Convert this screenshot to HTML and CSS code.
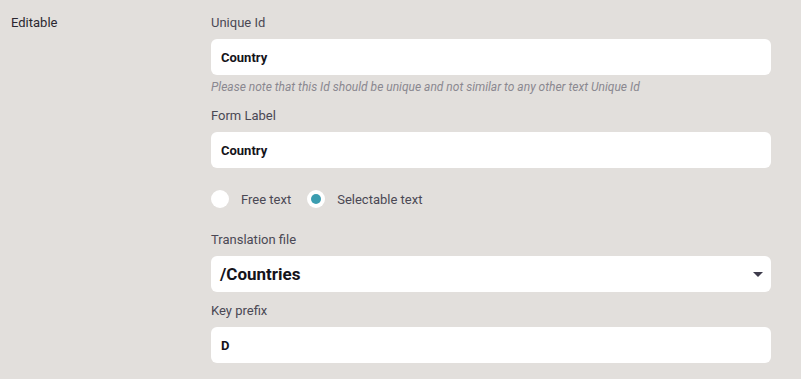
FILE: index.html
```html
<!DOCTYPE html>
<html lang="en">
  <head>
    <meta charset="UTF-8" />
    <meta name="viewport" content="width=device-width, initial-scale=1" />
    <title>Field settings</title>
    <link rel="stylesheet" href="styles.css">
  </head>
  <body>
    <div class="settingRow">
      <div class="settingName">Editable</div>

      <div class="settingFields">
        <div class="field">
          <label class="fieldLabel" for="uniqueId">Unique Id</label>
          <input class="textInput" id="uniqueId" type="text" value="Country" />
          <p class="hint">Please note that this Id should be unique and not similar to any other text Unique Id</p>
        </div>

        <div class="field">
          <label class="fieldLabel" for="formLabel">Form Label</label>
          <input class="textInput" id="formLabel" type="text" value="Country" />
        </div>

        <div class="radioRow">
          <label class="radio">
            <span class="radioDot"></span>
            Free text
          </label>
          <label class="radio">
            <span class="radioDot checked"></span>
            Selectable text
          </label>
        </div>

        <div class="field">
          <label class="fieldLabel">Translation file</label>
          <div class="select">
            <span>/Countries</span>
            <span class="caret"></span>
          </div>
        </div>

        <div class="field">
          <label class="fieldLabel" for="keyPrefix">Key prefix</label>
          <input class="textInput" id="keyPrefix" type="text" value="D" />
        </div>
      </div>
    </div>
  </body>
</html>
```

FILE: styles.css
```css
*,
*:before,
*:after {
  margin: 0;
  padding: 0;
  box-sizing: border-box;
}

html,
body {
  font-family: Roboto, "Liberation Sans", sans-serif;
}

body {
  background-color: #e2dfdc;
  color: #45434f;
  font-size: 13px;
  height: 379px;
  overflow: hidden;
}

.settingRow {
  display: flex;
  padding: 15px 30px 0 11px;
}

.settingName {
  width: 200px;
  line-height: 16px;
  color: #2a2730;
}

.settingFields {
  flex: 1;
  display: flex;
  flex-direction: column;
}

.field {
  display: flex;
  flex-direction: column;
}

.fieldLabel {
  display: block;
  line-height: 16px;
  margin-bottom: 8px;
  color: #4a4854;
}

.textInput {
  width: 100%;
  height: 36px;
  padding: 0 10px;
  border: 0;
  border-radius: 6px;
  background-color: #fff;
  font-family: Roboto, "Liberation Sans", sans-serif;
  font-size: 13px;
  font-weight: 700;
  color: #15131a;
  outline: 0;
}

.hint {
  margin-top: 5px;
  margin-bottom: 14px;
  line-height: 14px;
  font-size: 12px;
  font-style: italic;
  color: #8a8890;
}

.radioRow {
  display: flex;
  align-items: center;
  height: 18px;
  margin: 22px 0 24px 0;
}

.radio {
  display: flex;
  align-items: center;
  margin-right: 16px;
  color: #4a4854;
}

.radioDot {
  width: 18px;
  height: 18px;
  margin-right: 12px;
  border-radius: 50%;
  background-color: #fff;
  display: flex;
  align-items: center;
  justify-content: center;
}

.radioDot.checked:after {
  content: "";
  width: 10px;
  height: 10px;
  border-radius: 50%;
  background-color: #3b9db0;
}

.select {
  height: 36px;
  padding: 0 8px 0 9px;
  border-radius: 6px;
  background-color: #fff;
  display: flex;
  align-items: center;
  justify-content: space-between;
  font-size: 17px;
  font-weight: 700;
  color: #15131a;
  margin-bottom: 11px;
}

.caret {
  width: 0;
  height: 0;
  border-left: 5px solid transparent;
  border-right: 5px solid transparent;
  border-top: 5px solid #3d3b4b;
}
```
